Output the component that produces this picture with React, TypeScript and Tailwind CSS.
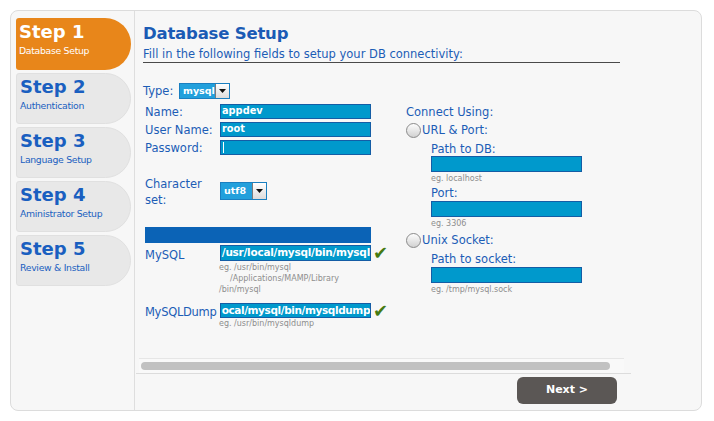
import React from "react";

function Select({ text, w, h }: { text: string; w: string; h: string }) {
  return (
    <div className={`${w} ${h} flex items-stretch border border-[#1a7fc0] bg-[#22a0dc]`}>
      <div className="flex-1 pl-[3px] flex items-center text-white font-bold text-[9.5px] leading-none overflow-hidden">
        {text}
      </div>
      <div className="w-[14px] border-l border-[#7a7a7a] bg-linear-to-b from-white to-[#dcdcdc] flex items-center justify-center">
        <svg width="7" height="4" viewBox="0 0 7 4">
          <polygon points="0,0 7,0 3.5,4" fill="#111" />
        </svg>
      </div>
    </div>
  );
}

function Input({ w, h, children, right }: { w: string; h: string; children?: React.ReactNode; right?: boolean }) {
  return (
    <div
      className={`${w} ${h} border border-[#145da5] bg-[#0099cc] flex items-center overflow-hidden whitespace-nowrap text-white ${
        right ? "justify-end" : "justify-start pl-[1px]"
      }`}
    >
      {children}
    </div>
  );
}

function Radio() {
  return (
    <div className="w-[15px] h-[15px] rounded-full border border-[#8a8a8a] bg-linear-to-b from-[#fdfdfd] to-[#d2d2d2] shrink-0" />
  );
}

const steps = [
  ["Step 1", "Database Setup"],
  ["Step 2", "Authentication"],
  ["Step 3", "Language Setup"],
  ["Step 4", "Aministrator Setup"],
  ["Step 5", "Review & Install"],
];

export default function App() {
  return (
    <div className="w-[714px] h-[421px] bg-white font-['DejaVu_Sans',sans-serif] pt-[10px] pl-[10px]">
      <div className="w-[692px] h-[401px] border border-[#dcdcdc] rounded-[8px] bg-[#f7f7f7] flex overflow-hidden">
        {/* Sidebar */}
        <div className="w-[124px] shrink-0 border-r border-[#dedede] pl-[5px] pt-[7px] flex flex-col gap-[3px]">
          {steps.map((s, i) =>
            i === 0 ? (
              <div
                key={i}
                className="h-[52px] w-[115px] rounded-l-[3px] rounded-r-[26px] bg-[#e8861a] pl-[3px] pt-[4px] text-white"
              >
                <div className="text-[18px] font-bold leading-[20px]">{s[0]}</div>
                <div className="mt-[3px] text-[9.3px] tracking-[-0.3px] leading-[12px]">{s[1]}</div>
              </div>
            ) : (
              <div
                key={i}
                className="h-[51px] w-[115px] rounded-l-[3px] rounded-r-[26px] bg-[#e8e8e8] border border-[#e0e0e0] pl-[3px] pt-[3px] text-[#1a5fc0]"
              >
                <div className="text-[18px] font-bold leading-[20px]">{s[0]}</div>
                <div className="mt-[3px] text-[9.3px] tracking-[-0.3px] leading-[12px]">{s[1]}</div>
              </div>
            )
          )}
        </div>

        {/* Main */}
        <div className="flex-1 flex flex-col">
          <div className="h-[347px] pl-[8px] pt-[13px] overflow-hidden text-[11.5px] text-[#1c5db6]">
            <div className="text-[16.5px] font-bold leading-[20px] tracking-[-0.2px] text-[#1b5bb5]">Database Setup</div>
            <div className="mt-[3px] w-[477px] leading-[15px] border-b border-[#4a4a4a]">
              Fill in the following fields to setup your DB connectivity:
            </div>

            <div className="mt-[20px] flex items-start">
              {/* Left column */}
              <div className="w-[263px] shrink-0">
                <div className="flex items-center h-[16px]">
                  <span className="w-[36px] leading-[14px]">Type:</span>
                  <Select text="mysql" w="w-[51px]" h="h-[16px]" />
                </div>
                <div className="mt-[3px] pl-[2px]">
                  <div className="flex items-center h-[18px]">
                    <span className="w-[75px] leading-[14px] pt-[1px]">Name:</span>
                    <Input w="w-[151px]" h="h-[15px]">
                      <span className="font-bold text-[9.8px]">appdev</span>
                    </Input>
                  </div>
                  <div className="flex items-center h-[18px]">
                    <span className="w-[75px] leading-[14px] pt-[1px]">User Name:</span>
                    <Input w="w-[151px]" h="h-[15px]">
                      <span className="font-bold text-[9.8px]">root</span>
                    </Input>
                  </div>
                  <div className="flex items-center h-[18px]">
                    <span className="w-[75px] leading-[14px] pt-[1px]">Password:</span>
                    <Input w="w-[151px]" h="h-[15px]">
                      <span className="ml-[1px] w-[1px] h-[11px] bg-white" />
                    </Input>
                  </div>

                  <div className="mt-[20px] flex items-start">
                    <span className="w-[75px] leading-[16px]">
                      Character
                      <br />
                      set:
                    </span>
                    <div className="mt-[6px]">
                      <Select text="utf8" w="w-[47px]" h="h-[18px]" />
                    </div>
                  </div>

                  <div className="mt-[19px] w-[226px] h-[16px] bg-[#0b63b6]" />

                  <div className="mt-[2px] flex items-center h-[16px]">
                    <span className="w-[75px] leading-[14px] pt-[3px]">MySQL</span>
                    <Input w="w-[151px]" h="h-[16px]" right>
                      <span className="font-bold text-[10.5px] tracking-[-0.25px]">/usr/local/mysql/bin/mysql</span>
                    </Input>
                    <span className="ml-[2px] text-[18px] leading-none text-[#467a12]">✔</span>
                  </div>
                  <div className="ml-[74px] mt-[1px] text-[8px] leading-[11px] text-[#8e8e8e]">
                    <div>eg. /usr/bin/mysql</div>
                    <div className="pl-[11px]">/Applications/MAMP/Library</div>
                    <div>/bin/mysql</div>
                  </div>

                  <div className="mt-[8px] flex items-center h-[15px]">
                    <span className="w-[75px] leading-[14px] pt-[2px] whitespace-nowrap tracking-[-0.3px]">MySQLDump</span>
                    <Input w="w-[151px]" h="h-[15px]" right>
                      <span className="font-bold text-[10.5px] tracking-[-0.4px]">ocal/mysql/bin/mysqldump</span>
                    </Input>
                    <span className="ml-[2px] text-[18px] leading-none text-[#467a12]">✔</span>
                  </div>
                  <div className="ml-[74px] text-[8px] leading-[11px] text-[#8e8e8e]">eg. /usr/bin/mysqldump</div>
                </div>
              </div>

              {/* Right column */}
              <div className="mt-[22px]">
                <div className="leading-[14px]">Connect Using:</div>
                <div className="mt-[3px] h-[16px] flex items-center gap-[1px]">
                  <Radio />
                  <span className="leading-[16px]">URL &amp; Port:</span>
                </div>
                <div className="pl-[25px]">
                  <div className="mt-[4px] leading-[14px]">Path to DB:</div>
                  <Input w="w-[151px]" h="h-[16px]" />
                  <div className="mt-[1px] text-[8px] leading-[11px] text-[#8e8e8e]">eg. localhost</div>
                  <div className="mt-[2px] leading-[14px]">Port:</div>
                  <div className="mt-[1px]">
                    <Input w="w-[151px]" h="h-[16px]" />
                  </div>
                  <div className="mt-[1px] text-[8px] leading-[11px] text-[#8e8e8e]">eg. 3306</div>
                </div>
                <div className="mt-[3px] h-[16px] flex items-center gap-[1px]">
                  <Radio />
                  <span className="leading-[16px]">Unix Socket:</span>
                </div>
                <div className="pl-[25px]">
                  <div className="mt-[4px] leading-[14px]">Path to socket:</div>
                  <div className="mt-[1px]">
                    <Input w="w-[151px]" h="h-[16px]" />
                  </div>
                  <div className="mt-[1px] text-[8px] leading-[11px] text-[#8e8e8e]">eg. /tmp/mysql.sock</div>
                </div>
              </div>
            </div>
          </div>

          {/* Scrollbar */}
          <div className="ml-[1px] w-[495px] border-b border-[#dcdcdc]">
            <div className="ml-[3px] w-[485px] h-[15px] border-t border-[#e6e6e6] bg-[#f9f9f9] pt-[3px] pl-[2px]">
              <div className="w-[469px] h-[8px] rounded-full bg-[#c1c1c1]" />
            </div>
          </div>

          {/* Button */}
          <div className="mt-[3px] ml-[382px]">
            <div className="w-[100px] h-[27px] rounded-[6px] bg-[#5b5755] flex items-center justify-center text-white font-bold text-[11px]">
              Next &gt;
            </div>
          </div>
        </div>
      </div>
    </div>
  );
}
